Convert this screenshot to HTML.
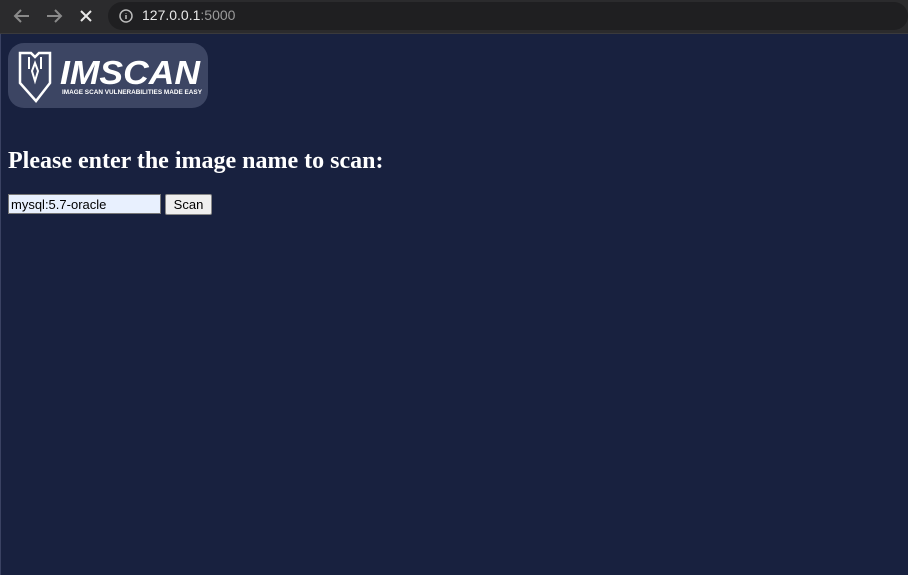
<!DOCTYPE html>
<html><head><style>
body{margin:0;width:908px;height:575px;overflow:hidden;background:#18213f;font-family:"Liberation Serif",serif;}
.bar{height:33px;background:#2b2b2d;position:relative;border-bottom:1px solid #3a3a3c;}
.pill{position:absolute;left:108px;top:2px;width:800px;height:28px;background:#1f1f21;border-radius:14px;}
.url{position:absolute;left:142px;top:7px;font:14px "Liberation Sans",sans-serif;color:#e8e8e8;}
.url span{color:#9a9a9a}
.page{position:relative;border-left:1px solid #3a4262;height:541px;}
.logo{position:absolute;left:7px;top:9px;width:200px;height:65px;background:#3c4563;border-radius:16px;}
h2{position:absolute;left:7px;top:114px;margin:0;font-size:24px;color:#fff;font-weight:bold;}
input{position:absolute;left:7px;top:160px;width:147px;height:16px;padding:1px 2px;border:1px solid #777;background:#e8f0fe;font:13px "Liberation Sans",sans-serif;margin:0;}
button{position:absolute;left:164px;top:160px;width:47px;height:21px;border:1px solid #888;background:#efefef;font:13px "Liberation Sans",sans-serif;padding:0;border-radius:2px;}
</style></head><body>
<div class="bar">
<svg width="100" height="33" style="position:absolute;left:0;top:0" fill="none" stroke-width="2">
<path d="M29 16H15M21 10l-6 6 6 6" stroke="#8a8a8a"/>
<path d="M47 16h14M55 10l6 6-6 6" stroke="#8a8a8a"/>
<path d="M81 11l10 10M91 11l-10 10" stroke="#e8e8e8"/>
</svg>
<div class="pill"></div>
<svg width="16" height="16" style="position:absolute;left:118px;top:8px" fill="none" stroke="#bbb" stroke-width="1.5"><circle cx="8" cy="8" r="6"/><path d="M8 7v4M8 5v.5"/></svg>
<div class="url">127.0.0.1<span>:5000</span></div>
</div>
<div class="page">
<div class="logo">
<svg width="200" height="65" viewBox="0 0 200 65">
<path d="M12 10h11l4 4 4-4h11v30l-14 18-16-18z" fill="none" stroke="#fff" stroke-width="2.5"/>
<path d="M21 14v12M33 14v12M27 20l-3 8 3 10 3-10z" stroke="#fff" stroke-width="2" fill="none"/>
<text x="52" y="41" font-family="Liberation Sans,sans-serif" font-weight="bold" font-style="italic" font-size="33" fill="#fff" textLength="140" lengthAdjust="spacingAndGlyphs">IMSCAN</text>
<text x="54" y="51" font-family="Liberation Sans,sans-serif" font-weight="bold" font-size="6.5" fill="#fff" textLength="140" lengthAdjust="spacingAndGlyphs">IMAGE SCAN VULNERABILITIES MADE EASY</text>
</svg>
</div>
<h2>Please enter the image name to scan:</h2>
<input value="mysql:5.7-oracle"><button>Scan</button>
</div>
</body></html>
